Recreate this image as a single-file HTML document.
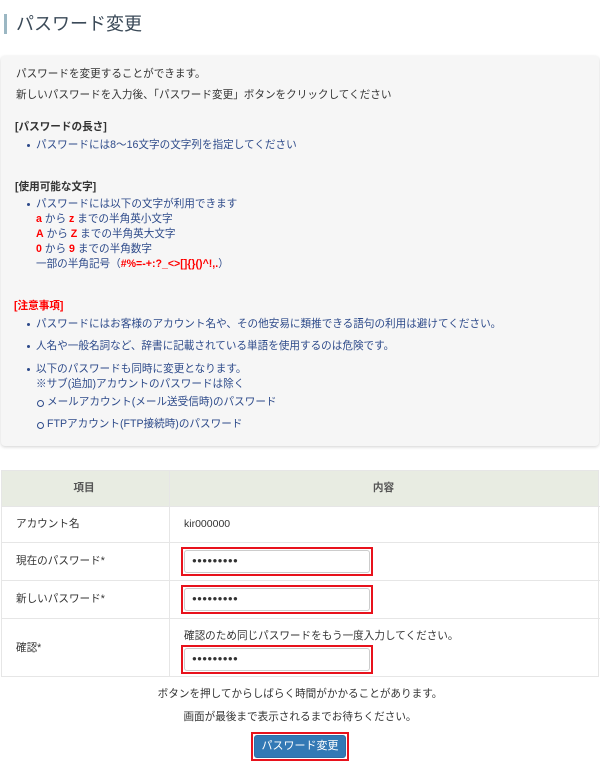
<!DOCTYPE html>
<html><head><meta charset="utf-8"><style>
*{margin:0;padding:0;box-sizing:border-box}
body{width:600px;height:767px;background:#fff;font-family:"Liberation Sans","Noto Sans CJK JP",sans-serif;font-size:10.6px;color:#333;position:relative;overflow:hidden}
.a{position:absolute;white-space:nowrap;line-height:16px;height:16px}
.b{color:#2d4a8a}
.r{color:#f00;font-weight:bold}
.dot::before{content:"";position:absolute;left:-9px;top:7px;width:3px;height:3px;border-radius:50%;background:#2d4a8a}
.cir::before{content:"";position:absolute;left:-10px;top:6px;width:5px;height:5px;border-radius:50%;border:1px solid #2d4a8a}
.box{position:absolute;left:1px;top:56px;width:598px;height:390px;background:#f6f6f6;border-radius:4px;box-shadow:0 1px 3px rgba(0,0,0,.18)}
.tb{position:absolute;left:1px;top:470px;width:598px;height:207px;border:1px solid #e6e6e6}
.hl{position:absolute;left:0;width:598px;height:1px;background:#e6e6e6}
.inp{position:absolute;left:181px;width:192px;height:29px;border:2px solid #e8121c;background:#fff}
.inp div{position:absolute;left:1px;top:1px;right:1px;bottom:1px;border:1px solid #ccc;border-radius:3px;font-size:8px;letter-spacing:0.3px;line-height:20px;padding-left:7px;color:#333;font-weight:bold}
</style></head><body>
<div style="position:absolute;left:4px;top:14px;width:3px;height:20px;background:#9bb7c3"></div>
<div class="a" style="left:16px;top:12px;height:24px;line-height:24px;font-size:18px;color:#3b4a58">パスワード変更</div>
<div class="box"></div>
<div class="a" style="left:16px;top:66px">パスワードを変更することができます。</div>
<div class="a" style="left:16px;top:87px">新しいパスワードを入力後、「パスワード変更」ボタンをクリックしてください</div>
<div class="a" style="left:15px;top:119px;font-weight:bold">[パスワードの長さ]</div>
<div class="a b dot" style="left:36px;top:137px">パスワードには8～16文字の文字列を指定してください</div>
<div class="a" style="left:15px;top:179px;font-weight:bold">[使用可能な文字]</div>
<div class="a b dot" style="left:36px;top:196px">パスワードには以下の文字が利用できます</div>
<div class="a b" style="left:36px;top:211px"><span class="r">a</span> から <span class="r">z</span> までの半角英小文字</div>
<div class="a b" style="left:36px;top:226px"><span class="r">A</span> から <span class="r">Z</span> までの半角英大文字</div>
<div class="a b" style="left:36px;top:241px"><span class="r">0</span> から <span class="r">9</span> までの半角数字</div>
<div class="a b" style="left:36px;top:256px">一部の半角記号（<span class="r">#%=-+:?_&lt;&gt;[]{}()^!,.</span>）</div>
<div class="a r" style="left:14px;top:298px">[注意事項]</div>
<div class="a b dot" style="left:36px;top:316px">パスワードにはお客様のアカウント名や、その他安易に類推できる語句の利用は避けてください。</div>
<div class="a b dot" style="left:36px;top:338px">人名や一般名詞など、辞書に記載されている単語を使用するのは危険です。</div>
<div class="a b dot" style="left:36px;top:361px">以下のパスワードも同時に変更となります。</div>
<div class="a b" style="left:36px;top:376px">※サブ(追加)アカウントのパスワードは除く</div>
<div class="a b cir" style="left:47px;top:394px">メールアカウント(メール送受信時)のパスワード</div>
<div class="a b cir" style="left:47px;top:416px">FTPアカウント(FTP接続時)のパスワード</div>

<div class="tb">
<div style="position:absolute;left:0;top:0;width:596px;height:35px;background:#e8ece2"></div>
<div style="position:absolute;left:167px;top:0;width:1px;height:205px;background:#e6e6e6"></div>
<div class="hl" style="top:35px"></div>
<div class="hl" style="top:71px"></div>
<div class="hl" style="top:109px"></div>
<div class="hl" style="top:147px"></div>
</div>
<div class="a" style="left:0;width:168px;text-align:center;top:480px;font-weight:bold;color:#555">項目</div>
<div class="a" style="left:168px;width:431px;text-align:center;top:480px;font-weight:bold;color:#555">内容</div>
<div class="a" style="left:16px;top:516px">アカウント名</div>
<div class="a" style="left:184px;top:516px;font-size:10.5px">kir000000</div>
<div class="a" style="left:16px;top:553px">現在のパスワード*</div>
<div class="a" style="left:16px;top:591px">新しいパスワード*</div>
<div class="a" style="left:16px;top:640px">確認*</div>
<div class="a" style="left:184px;top:628px">確認のため同じパスワードをもう一度入力してください。</div>
<div class="inp" style="top:547px"><div>●●●●●●●●●</div></div>
<div class="inp" style="top:585px"><div>●●●●●●●●●</div></div>
<div class="inp" style="top:645px"><div>●●●●●●●●●</div></div>

<div class="a" style="left:0;width:600px;text-align:center;top:686px">ボタンを押してからしばらく時間がかかることがあります。</div>
<div class="a" style="left:0;width:600px;text-align:center;top:709px">画面が最後まで表示されるまでお待ちください。</div>
<div style="position:absolute;left:251px;top:732px;width:98px;height:29px;border:2px solid #e8121c;background:#fff">
<div style="position:absolute;left:1px;top:1px;right:1px;bottom:1px;background:#3379b5;border:1px solid #2e6da4;border-radius:3px;color:#fff;text-align:center;line-height:21px;font-size:11px">パスワード変更</div>
</div>
</body></html>
